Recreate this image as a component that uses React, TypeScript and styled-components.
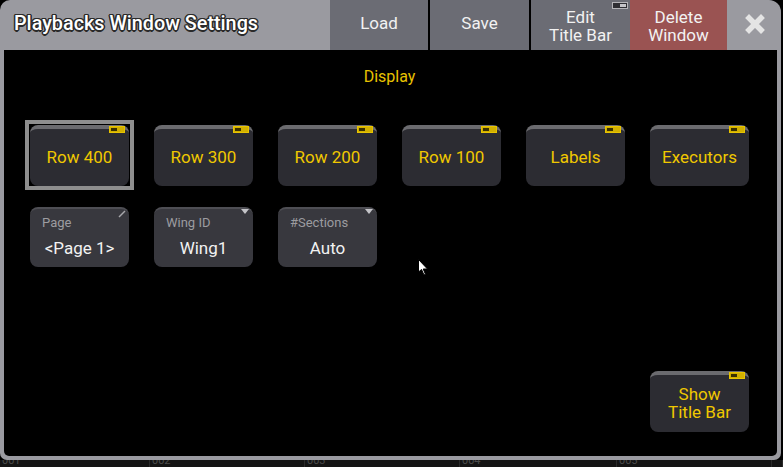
import styled, { createGlobalStyle } from 'styled-components'

const GlobalStyle = createGlobalStyle`
  html, body {
    margin: 0;
    padding: 0;
    background: #000;
    font-family: Roboto, "Liberation Sans", sans-serif;
  }
`

const Page = styled.div`
  width: 783px;
  height: 467px;
  display: flex;
  flex-direction: column;
  position: relative;
  overflow: hidden;
  background: #000;
`

const Window = styled.div`
  width: 781px;
  height: 460px;
  display: flex;
  flex-direction: column;
  background: #9a9aa0;
  border-radius: 10px 12px 7px 7px;
  padding-bottom: 4px;
  box-sizing: border-box;
  position: relative;
  z-index: 1;
`

const TitleBar = styled.div`
  display: flex;
  height: 50px;
  flex: 0 0 50px;
`

const Title = styled.div`
  flex: 0 0 330px;
  display: flex;
  align-items: center;
  padding: 0 0 3px 14px;
  box-sizing: border-box;
  color: #fff;
  font-size: 19.8px;
  font-weight: 500;
  text-shadow: -1px -1px 0 #2a2a2a, 1px -1px 0 #2a2a2a, -1px 1px 0 #2a2a2a,
    1px 1px 0 #2a2a2a, 0 -1.5px 0 #2a2a2a, 0 1.5px 0 #2a2a2a, -1.5px 0 0 #2a2a2a,
    1.5px 0 0 #2a2a2a;
`

const BarButton = styled.div<{ $w: number; $red?: boolean; $sep?: boolean; $two?: boolean }>`
  flex: 0 0 ${p => p.$w}px;
  display: flex;
  align-items: center;
  justify-content: center;
  text-align: center;
  position: relative;
  background: ${p => (p.$red ? '#9a5352' : '#6b6c74')};
  border-right: ${p => (p.$sep ? '2px solid #000' : 'none')};
  color: #f2f2f2;
  font-size: 17px;
  line-height: 17.5px;
  box-sizing: border-box;
  padding: ${p => (p.$two ? '3px 0 0' : '0 0 3px')};
`

const BarToggle = styled.span`
  position: absolute;
  top: 2px;
  right: 2px;
  width: 16px;
  height: 7px;
  box-sizing: border-box;
  border: 1px solid #b4b4b8;
  background: #2e2e33;

  &::after {
    content: '';
    position: absolute;
    right: 1px;
    top: 1px;
    width: 6px;
    height: 3px;
    background: #c4c4c8;
  }
`

const CloseButton = styled.div`
  flex: 1;
  display: flex;
  align-items: center;
  justify-content: center;
  padding: 0 0 3px 2px;
`

const Content = styled.div`
  flex: 1;
  margin: 0 4px;
  background: #000;
  border-radius: 0 0 5px 5px;
  display: flex;
  flex-direction: column;
  padding: 0 28px 24px 26px;
  position: relative;
`

const SectionTitle = styled.div`
  height: 50px;
  display: flex;
  align-items: center;
  justify-content: center;
  color: #e8c200;
  font-size: 16px;
  padding-top: 2px;
  box-sizing: border-box;
`

const Grid = styled.div<{ $top: number }>`
  display: grid;
  grid-template-columns: repeat(6, 99px);
  column-gap: 25px;
  margin-top: ${p => p.$top}px;
`

const Toggle = styled.div<{ $selected?: boolean }>`
  height: 61px;
  position: relative;
  box-sizing: border-box;
  background: #2c2c32;
  border-top: 4px solid #6b6b6f;
  border-radius: 8px;
  display: flex;
  align-items: center;
  justify-content: center;
  text-align: center;
  color: #f0c800;
  font-size: 17px;
  line-height: 18px;
  padding-bottom: 2px;

  &::before {
    content: '';
    display: ${p => (p.$selected ? 'block' : 'none')};
    position: absolute;
    top: -9px;
    left: -5px;
    right: -5px;
    bottom: -4px;
    border: 4px solid #8e8e8e;
  }
`

const Led = styled.span`
  position: absolute;
  top: -3px;
  right: 4px;
  width: 16px;
  height: 7px;
  box-sizing: border-box;
  background: #d2b000;
  border: 1px solid #e8c400;

  &::after {
    content: '';
    position: absolute;
    left: 1px;
    top: 1px;
    width: 6px;
    height: 3px;
    background: #3a3000;
  }
`

const Field = styled.div`
  height: 60px;
  position: relative;
  box-sizing: border-box;
  background: #38383e;
  border-top: 2px solid #4e4e54;
  border-radius: 8px;
  display: flex;
  flex-direction: column;
`

const FieldLabel = styled.div`
  color: #9c9ca0;
  font-size: 13px;
  padding: 6px 0 0 12px;
  height: 20px;
`

const FieldValue = styled.div`
  color: #f2f2f2;
  font-size: 17px;
  text-align: center;
  margin-top: 3px;
`

const Corner = styled.svg`
  position: absolute;
  top: 0;
  right: 3px;
`

const Footer = styled.div`
  margin-top: auto;
  display: flex;
  justify-content: flex-end;
`

const FooterCell = styled.div`
  width: 99px;
`

const Cursor = styled.svg`
  position: absolute;
  left: 414px;
  top: 209px;
`

const Strip = styled.div`
  height: 7px;
  display: flex;
  background: #141414;
  overflow: hidden;
`

const StripCell = styled.div<{ $w: number }>`
  flex: 0 0 ${p => p.$w}px;
  border-right: 1px solid #2a2a2a;
  color: #4a4a4a;
  font-size: 11px;
  line-height: 11px;
  margin-top: -5px;
  padding-left: 2px;
  box-sizing: border-box;
`

const rowOne = ['Row 400', 'Row 300', 'Row 200', 'Row 100', 'Labels', 'Executors']

const fields = [
  { label: 'Page', value: '<Page 1>', corner: 'edit' },
  { label: 'Wing ID', value: 'Wing1', corner: 'list' },
  { label: '#Sections', value: 'Auto', corner: 'list' },
]

const App = () => {
  return (
    <Page>
      <GlobalStyle />
      <Window>
        <TitleBar>
          <Title>Playbacks Window Settings</Title>
          <BarButton $w={100} $sep>Load</BarButton>
          <BarButton $w={101} $sep>Save</BarButton>
          <BarButton $w={99} $two>
            Edit<br />Title Bar
            <BarToggle />
          </BarButton>
          <BarButton $w={97} $red $two>Delete<br />Window</BarButton>
          <CloseButton>
            <svg width="20" height="20" viewBox="0 0 20 20">
              <path d="M4 4 L16 16 M16 4 L4 16" stroke="#e4e4e4" strokeWidth="5.5" strokeLinecap="square" />
            </svg>
          </CloseButton>
        </TitleBar>
        <Content>
          <SectionTitle>Display</SectionTitle>
          <Grid $top={25}>
            {rowOne.map((t, i) => (
              <Toggle key={t} $selected={i === 0}>
                {t}
                <Led />
              </Toggle>
            ))}
          </Grid>
          <Grid $top={21}>
            {fields.map(f => (
              <Field key={f.label}>
                <FieldLabel>{f.label}</FieldLabel>
                <FieldValue>{f.value}</FieldValue>
                {f.corner === 'edit' ? (
                  <Corner width="10" height="10" viewBox="0 0 10 10">
                    <path d="M3 8 L9 2" stroke="#a8a8ac" strokeWidth="1.5" />
                  </Corner>
                ) : (
                  <Corner width="10" height="6" viewBox="0 0 10 6">
                    <path d="M1 0 L9 0 L5 5 Z" fill="#c4c4c8" />
                  </Corner>
                )}
              </Field>
            ))}
          </Grid>
          <Footer>
            <FooterCell>
              <Toggle>
                Show<br />Title Bar
                <Led />
              </Toggle>
            </FooterCell>
          </Footer>
          <Cursor width="12" height="19" viewBox="0 0 12 19">
            <path d="M0.5 0.5 L0.5 13 L3.5 10.5 L6 16 L7.5 15.3 L5.2 10 L9.5 10 Z" fill="#fff" stroke="#000" strokeWidth="1" />
          </Cursor>
        </Content>
      </Window>
      <Strip>
        <StripCell $w={150}>001</StripCell>
        <StripCell $w={155}>002</StripCell>
        <StripCell $w={155}>003</StripCell>
        <StripCell $w={157}>004</StripCell>
        <StripCell $w={155}>005</StripCell>
        <StripCell $w={11}></StripCell>
      </Strip>
    </Page>
  )
}

export default App
